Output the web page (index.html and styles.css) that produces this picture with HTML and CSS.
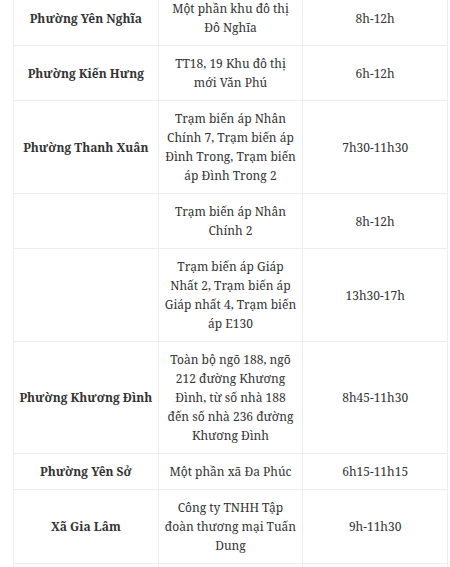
FILE: index.html
```html
<!DOCTYPE html>
<html lang="vi">
<head>
<meta charset="utf-8">
<link rel="stylesheet" href="styles.css">
</head>
<body>
<div class="wrap">
<table class="schedule">
  <tbody>
    <tr><td class="area">Phường Yên Nghĩa</td><td>Một phần khu đô thị Đô Nghĩa</td><td>8h-12h</td></tr>
    <tr><td class="area">Phường Kiến Hưng</td><td>TT18, 19 Khu đô thị mới Văn Phú</td><td>6h-12h</td></tr>
    <tr><td class="area">Phường Thanh Xuân</td><td>Trạm biến áp Nhân Chính 7, Trạm biến áp Đình Trong, Trạm biến áp Đình Trong 2</td><td>7h30-11h30</td></tr>
    <tr><td class="area"></td><td>Trạm biến áp Nhân Chính 2</td><td>8h-12h</td></tr>
    <tr><td class="area"></td><td>Trạm biến áp Giáp Nhất 2, Trạm biến áp Giáp nhất 4, Trạm biến áp E130</td><td>13h30-17h</td></tr>
    <tr><td class="area">Phường Khương Đình</td><td>Toàn bộ ngõ 188, ngõ 212 đường Khương Đình, từ số nhà 188 đến số nhà 236 đường Khương Đình</td><td>8h45-11h30</td></tr>
    <tr><td class="area">Phường Yên Sở</td><td>Một phần xã Đa Phúc</td><td>6h15-11h15</td></tr>
    <tr><td class="area">Xã Gia Lâm</td><td>Công ty TNHH Tập đoàn thương mại Tuấn Dung</td><td>9h-11h30</td></tr>
    <tr><td class="area">Xã Bát Tràng</td><td>Một phần xã Bát Tràng</td><td>8h-12h</td></tr>
  </tbody>
</table>
</div>
</body>
</html>
```
FILE: styles.css
```css
html, body {
  margin: 0;
  padding: 0;
  background: #ffffff;
}
.wrap {
  padding-left: 13px;
  margin-top: -10px;
}
.schedule {
  width: 435px;
  table-layout: fixed;
  border-collapse: collapse;
  font-family: "Noto Serif", "DejaVu Serif", serif;
  font-size: 12px;
  line-height: 19px;
  color: #333333;
}
.schedule td {
  border: 1px solid #ededed;
  padding: 8px 5px;
  text-align: center;
  vertical-align: middle;
}
.schedule .area {
  font-weight: bold;
}
```
